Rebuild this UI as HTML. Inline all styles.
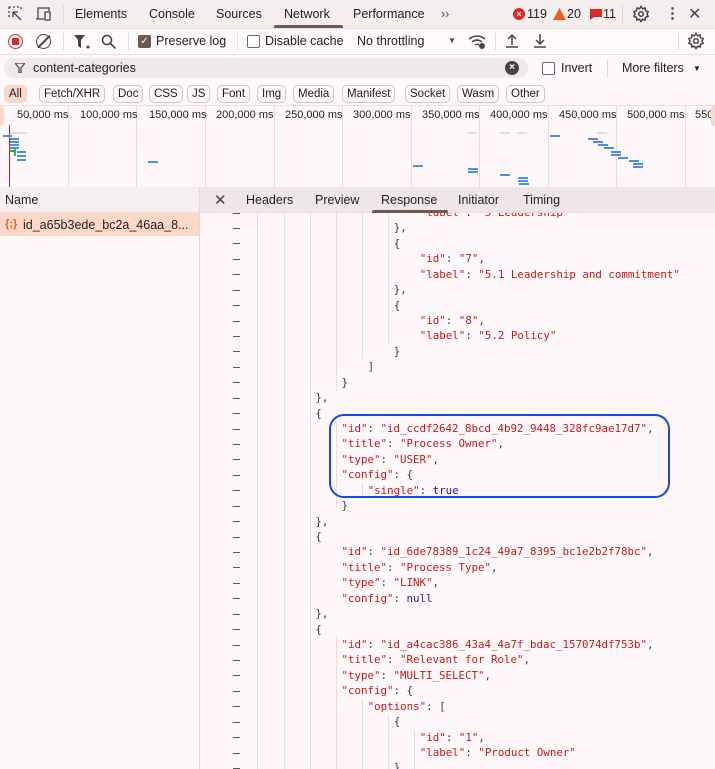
<!DOCTYPE html>
<html><head><meta charset="utf-8"><style>
*{margin:0;padding:0;box-sizing:border-box}
body{width:715px;height:769px;overflow:hidden;background:#fff8fb;font-family:"Liberation Sans",sans-serif;font-size:12.5px;color:#1f1f1f;position:relative}
.a{position:absolute}
.bar1{left:0;top:0;width:715px;height:29px;background:#f4eeee;border-bottom:1px solid #f3d8cf}
.bar2{left:0;top:29px;width:715px;height:26px;background:#fffafc;border-bottom:1px solid #f6dcd2}
.t{position:absolute;top:7px;font-size:12.5px}
.chip{position:absolute;top:85px;height:18px;border:1px solid #cfc6c8;border-radius:5px;font-size:11.5px;line-height:16px;padding:0 4px;background:#fff8fb}
.tl{left:0;top:105px;width:715px;height:82px;background:#fff8fb;border-top:1px solid #f6dcd2}
.vl{position:absolute;top:105px;width:1px;height:82px;background:#f8d9cc}
.tk{position:absolute;top:109px;font-size:11px}
.bb{position:absolute;height:2px;width:10px;background:#4a90e8}
.gb{position:absolute;height:2px;top:132px;background:#e2dcdc}
.code{left:200px;top:213px;width:515px;height:556px;overflow:hidden;font-family:"DejaVu Sans Mono",monospace;font-size:10.8px}
.ln{position:absolute;left:0;height:15.43px;line-height:15.43px;white-space:pre;color:#303942}
.k{color:#c41a16}.s{color:#c41a16}.b{color:#1a1aa6}
.dash{position:absolute;left:33px;width:7px;height:1px;background:#555}
.g{position:absolute;width:1px;background:#f8d9cc}
</style></head><body>
<div class="a bar1"></div>
<svg class="a" style="left:8px;top:6px" width="16" height="16" viewBox="0 0 16 16" fill="none" stroke="#444" stroke-width="1.3"><path d="M1 1h2M5 1h2M9 1h2M1 1v2M1 5v2M1 9v2M13 1v2M5 6l8 8M5 6h5M5 6v5" /></svg>
<svg class="a" style="left:35px;top:6px" width="18" height="16" viewBox="0 0 18 16" fill="none" stroke="#444" stroke-width="1.3"><path d="M3 13V2h11v3M1 13h8M10 6h5v8h-5z"/></svg>
<div class="a" style="left:63px;top:5px;width:1px;height:18px;background:#ddd"></div>
<div class="t" style="left:75px">Elements</div>
<div class="t" style="left:149px">Console</div>
<div class="t" style="left:216px">Sources</div>
<div class="t" style="left:284px">Network</div>
<div class="a" style="left:274px;top:25px;width:69px;height:3px;background:#6a5a52;border-radius:2px 2px 0 0"></div>
<div class="t" style="left:353px">Performance</div>
<div class="t" style="left:441px;color:#555">&#8250;&#8250;</div>
<div class="a" style="left:513px;top:8px;width:12px;height:12px;border-radius:6px;background:#e0282a;color:#fff;font-size:9px;line-height:12px;text-align:center;font-weight:bold">×</div>
<div class="t" style="left:527px">119</div>
<svg class="a" style="left:553px;top:8px" width="13" height="12"><path d="M6.5 0L13 12H0z" fill="#e8611a"/></svg>
<div class="t" style="left:567px">20</div>
<svg class="a" style="left:590px;top:9px" width="12" height="11"><path d="M0 0h12v8H4l-4 3z" fill="#e0282a"/></svg>
<div class="t" style="left:603px">11</div>
<div class="a" style="left:622px;top:5px;width:1px;height:18px;background:#f0d0c4"></div>
<svg class="a" style="left:632px;top:5px" width="18" height="18" viewBox="0 0 24 24" fill="none" stroke="#444" stroke-width="2"><circle cx="12" cy="12" r="3"/><path d="M12 2l2 3 3.5-1 .5 3.5 3.5 1.5-1.5 3 1.5 3-3.5 1.5-.5 3.5-3.5-1-2 3-2-3-3.5 1-.5-3.5L2.5 15 4 12 2.5 9 6 7.5 6.5 4 10 5z"/></svg>
<div class="t" style="left:665px;top:4px;font-size:15px;color:#444;font-weight:bold">⋮</div>
<div class="t" style="left:688px;top:4px;font-size:16px;color:#444">✕</div>

<div class="a bar2"></div>
<div class="a" style="left:8px;top:34px;width:15px;height:15px;border-radius:8px;border:1.5px solid #d6262a"></div>
<div class="a" style="left:12px;top:38px;width:7px;height:7px;border-radius:1px;background:#d6262a"></div>
<div class="a" style="left:36px;top:34px;width:15px;height:15px;border-radius:8px;border:1.5px solid #444"></div>
<div class="a" style="left:43px;top:33px;width:1.5px;height:17px;background:#444;transform:rotate(45deg)"></div>
<div class="a" style="left:63px;top:33px;width:1px;height:17px;background:#ddd"></div>
<svg class="a" style="left:74px;top:35px" width="16" height="14"><path d="M0 0h11L7 5v8L4 11V5z" fill="#444"/><circle cx="14" cy="12" r="1.5" fill="#444"/></svg>
<svg class="a" style="left:101px;top:34px" width="15" height="15" fill="none" stroke="#444" stroke-width="1.6"><circle cx="6" cy="6" r="4.5"/><path d="M9.5 9.5l5 5"/></svg>
<div class="a" style="left:128px;top:33px;width:1px;height:17px;background:#ddd"></div>
<div class="a" style="left:138px;top:35px;width:13px;height:13px;border-radius:2px;background:#6b5a52;color:#fff;font-size:10px;line-height:13px;text-align:center">✓</div>
<div class="t" style="left:156px;top:34px">Preserve log</div>
<div class="a" style="left:237px;top:33px;width:1px;height:17px;background:#ddd"></div>
<div class="a" style="left:247px;top:35px;width:13px;height:13px;border-radius:2px;border:1px solid #666;background:#fff"></div>
<div class="t" style="left:265px;top:34px">Disable cache</div>
<div class="t" style="left:357px;top:34px">No throttling</div>
<div class="t" style="left:448px;top:36px;font-size:8px;color:#444">▼</div>
<svg class="a" style="left:468px;top:34px" width="18" height="15" fill="none" stroke="#444" stroke-width="1.5"><path d="M1 5q8-6 16 0M4 8q5-4 10 0M7 11q2-1.5 4 0"/><circle cx="14" cy="12" r="2.2" fill="#444"/></svg>
<div class="a" style="left:495px;top:33px;width:1px;height:17px;background:#ddd"></div>
<svg class="a" style="left:505px;top:33px" width="14" height="16" fill="none" stroke="#444" stroke-width="1.5"><path d="M7 12V2M3 6l4-4 4 4M1 14h12"/></svg>
<svg class="a" style="left:533px;top:33px" width="14" height="16" fill="none" stroke="#444" stroke-width="1.5"><path d="M7 1v10M3 7l4 4 4-4M1 14h12"/></svg>
<div class="a" style="left:678px;top:33px;width:1px;height:17px;background:#f0d0c4"></div>
<svg class="a" style="left:687px;top:32px" width="18" height="18" viewBox="0 0 24 24" fill="none" stroke="#444" stroke-width="2"><circle cx="12" cy="12" r="3"/><path d="M12 2l2 3 3.5-1 .5 3.5 3.5 1.5-1.5 3 1.5 3-3.5 1.5-.5 3.5-3.5-1-2 3-2-3-3.5 1-.5-3.5L2.5 15 4 12 2.5 9 6 7.5 6.5 4 10 5z"/></svg>

<div class="a" style="left:4px;top:58px;width:524px;height:20px;border-radius:10px;background:#efe9ec"></div>
<svg class="a" style="left:15px;top:63px" width="10" height="10"><path d="M0 0h10L6 5v5H4V5z" fill="none" stroke="#444" stroke-width="1.2"/></svg>
<div class="t" style="left:33px;top:61px">content-categories</div>
<div class="a" style="left:505px;top:61px;width:14px;height:14px;border-radius:7px;background:#444;color:#fff;font-size:10px;line-height:14px;text-align:center;font-weight:bold">×</div>
<div class="a" style="left:542px;top:62px;width:13px;height:13px;border-radius:2px;border:1px solid #666;background:#fff"></div>
<div class="t" style="left:561px;top:61px">Invert</div>
<div class="a" style="left:607px;top:60px;width:1px;height:17px;background:#f0d0c4"></div>
<div class="t" style="left:622px;top:61px">More filters</div>
<div class="t" style="left:693px;top:64px;font-size:8px">▼</div>

<div class="chip" style="left:4px;border-color:#fcd6c6;background:#fcd6c6">All</div>
<div class="chip" style="left:39px">Fetch/XHR</div>
<div class="chip" style="left:113px">Doc</div>
<div class="chip" style="left:149px">CSS</div>
<div class="chip" style="left:187px">JS</div>
<div class="chip" style="left:217px">Font</div>
<div class="chip" style="left:257px">Img</div>
<div class="chip" style="left:293px">Media</div>
<div class="chip" style="left:342px">Manifest</div>
<div class="chip" style="left:405px">Socket</div>
<div class="chip" style="left:457px">Wasm</div>
<div class="chip" style="left:506px">Other</div>

<div class="a tl"></div>
<div class="vl" style="left:68px"></div><div class="vl" style="left:136px"></div><div class="vl" style="left:205px"></div><div class="vl" style="left:274px"></div><div class="vl" style="left:342px"></div><div class="vl" style="left:411px"></div><div class="vl" style="left:479px"></div><div class="vl" style="left:548px"></div><div class="vl" style="left:616px"></div><div class="vl" style="left:685px"></div>
<div class="tk" style="left:17px">50,000 ms</div><div class="tk" style="left:80px">100,000 ms</div><div class="tk" style="left:149px">150,000 ms</div><div class="tk" style="left:216px">200,000 ms</div><div class="tk" style="left:285px">250,000 ms</div><div class="tk" style="left:353px">300,000 ms</div><div class="tk" style="left:422px">350,000 ms</div><div class="tk" style="left:490px">400,000 ms</div><div class="tk" style="left:559px">450,000 ms</div><div class="tk" style="left:627px">500,000 ms</div><div class="tk" style="left:695px">550</div>
<div class="a" style="left:0;top:106px;width:4px;height:20px;background:#fcd6c6;border-radius:0 3px 3px 0"></div>
<div class="a" style="left:711px;top:106px;width:4px;height:20px;background:#fcd6c6;border-radius:3px 0 0 3px"></div>
<div class="a" style="left:9px;top:125px;width:1px;height:62px;background:#b22"></div>
<div class="gb" style="left:10px;width:8px"></div><div class="gb" style="left:18px;width:9px"></div>
<div class="gb" style="left:468px;width:8px"></div><div class="gb" style="left:500px;width:10px"></div><div class="gb" style="left:517px;width:10px"></div><div class="gb" style="left:597px;width:10px"></div>
<div class="bb" style="left:3px;top:135px;width:9px"></div>
<div class="bb" style="left:10px;top:138px;width:9px"></div><div class="bb" style="left:10px;top:141px;width:9px"></div><div class="bb" style="left:10px;top:144px;width:9px"></div><div class="bb" style="left:10px;top:147px;width:9px"></div>
<div class="a" style="left:9px;top:150px;width:5px;height:2px;background:#2a2"></div>
<div class="a" style="left:14px;top:148px;width:2px;height:8px;background:#3a8"></div>
<div class="bb" style="left:17px;top:151px;width:9px"></div><div class="bb" style="left:17px;top:155px;width:9px"></div><div class="bb" style="left:17px;top:159px;width:9px"></div>
<div class="bb" style="left:148px;top:161px"></div>
<div class="bb" style="left:413px;top:165px"></div>
<div class="bb" style="left:468px;top:168px"></div><div class="bb" style="left:468px;top:171px"></div>
<div class="bb" style="left:500px;top:174px"></div>
<div class="bb" style="left:518px;top:177px"></div><div class="bb" style="left:518px;top:180px"></div><div class="bb" style="left:519px;top:183px"></div>
<div class="bb" style="left:550px;top:135px"></div>
<div class="bb" style="left:588px;top:138px"></div><div class="bb" style="left:593px;top:141px"></div><div class="bb" style="left:598px;top:144px"></div><div class="bb" style="left:604px;top:147px"></div><div class="bb" style="left:611px;top:151px"></div><div class="bb" style="left:611px;top:154px"></div><div class="bb" style="left:618px;top:157px"></div><div class="bb" style="left:629px;top:160px"></div><div class="bb" style="left:633px;top:163px"></div><div class="bb" style="left:633px;top:166px"></div>

<div class="a" style="left:0;top:187px;width:200px;height:26px;background:#f4eff2;border-bottom:1px solid #f6dcd2"></div>
<div class="t" style="left:5px;top:193px">Name</div>
<div class="a" style="left:0;top:213px;width:199px;height:23px;background:#fdd8c8"></div>
<div class="t" style="left:5px;top:218px;color:#e8611a;font-size:11px;font-weight:bold">{;}</div>
<div class="t" style="left:23px;top:218px">id_a65b3ede_bc2a_46aa_8...</div>
<div class="a" style="left:199px;top:187px;width:1px;height:582px;background:#f3d3c6"></div>
<div class="a" style="left:200px;top:187px;width:515px;height:26px;background:#eee6e8;border-bottom:1px solid #f6dcd2"></div>
<div class="t" style="left:214px;top:191px;font-size:15px;color:#444">✕</div>
<div class="t" style="left:246px;top:193px">Headers</div>
<div class="t" style="left:315px;top:193px">Preview</div>
<div class="t" style="left:381px;top:193px">Response</div>
<div class="a" style="left:372px;top:210px;width:76px;height:3px;background:#6a5a52;border-radius:2px 2px 0 0"></div>
<div class="t" style="left:458px;top:193px">Initiator</div>
<div class="t" style="left:523px;top:193px">Timing</div>

<div class="a code">
<div class="g" style="left:57px;top:0;height:556px"></div>
<div class="g" style="left:84px;top:0;height:556px"></div>
<div class="g" style="left:110px;top:0;height:556px"></div>
<div class="g" style="left:136px;top:0;height:178px"></div>
<div class="g" style="left:162px;top:0;height:146px"></div>
<div class="g" style="left:188px;top:0;height:130px"></div>
<div class="g" style="left:136px;top:208px;height:86px"></div>
<div class="g" style="left:162px;top:270px;height:16px"></div>
<div class="g" style="left:136px;top:424px;height:132px"></div>
<div class="g" style="left:162px;top:486px;height:70px"></div>
<div class="g" style="left:188px;top:502px;height:54px"></div>
<div class="g" style="left:214px;top:517px;height:39px"></div>
<div id="L"></div>
</div>
<div class="a" style="left:329px;top:414px;width:341px;height:84px;border:2px solid #1448e6;border-radius:15px"></div>
<script>
var L=[[8,'<span class="k">"label"</span>: <span class="s">"5 Leadership"</span>'],[7,'},'],[7,'{'],[8,'<span class="k">"id"</span>: <span class="s">"7"</span>,'],[8,'<span class="k">"label"</span>: <span class="s">"5.1 Leadership and commitment"</span>'],[7,'},'],[7,'{'],[8,'<span class="k">"id"</span>: <span class="s">"8"</span>,'],[8,'<span class="k">"label"</span>: <span class="s">"5.2 Policy"</span>'],[7,'}'],[6,']'],[5,'}'],[4,'},'],[4,'{'],
[5,'<span class="k">"id"</span>: <span class="s">"id_ccdf2642_8bcd_4b92_9448_328fc9ae17d7"</span>,'],[5,'<span class="k">"title"</span>: <span class="s">"Process Owner"</span>,'],[5,'<span class="k">"type"</span>: <span class="s">"USER"</span>,'],[5,'<span class="k">"config"</span>: {'],[6,'<span class="k">"single"</span>: <span class="b">true</span>'],[5,'}'],[4,'},'],[4,'{'],
[5,'<span class="k">"id"</span>: <span class="s">"id_6de78389_1c24_49a7_8395_bc1e2b2f78bc"</span>,'],[5,'<span class="k">"title"</span>: <span class="s">"Process Type"</span>,'],[5,'<span class="k">"type"</span>: <span class="s">"LINK"</span>,'],[5,'<span class="k">"config"</span>: <span class="b">null</span>'],[4,'},'],[4,'{'],
[5,'<span class="k">"id"</span>: <span class="s">"id_a4cac386_43a4_4a7f_bdac_157074df753b"</span>,'],[5,'<span class="k">"title"</span>: <span class="s">"Relevant for Role"</span>,'],[5,'<span class="k">"type"</span>: <span class="s">"MULTI_SELECT"</span>,'],[5,'<span class="k">"config"</span>: {'],[6,'<span class="k">"options"</span>: ['],[7,'{'],[8,'<span class="k">"id"</span>: <span class="s">"1"</span>,'],[8,'<span class="k">"label"</span>: <span class="s">"Product Owner"</span>'],[7,'}']];
var h='';for(var i=0;i<L.length;i++){var t=-8+i*15.43;h+='<div class="dash" style="top:'+(t+7.5)+'px"></div><div class="ln" style="top:'+t+'px;left:'+(11+26.1*L[i][0])+'px">'+L[i][1]+'</div>';}
document.getElementById('L').innerHTML=h;
</script>
</body></html>
